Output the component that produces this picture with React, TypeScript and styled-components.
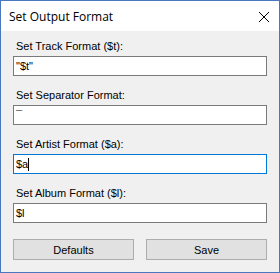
import styled, {createGlobalStyle} from 'styled-components';

const GlobalStyle = createGlobalStyle`
  html, body {
    margin: 0;
    padding: 0;
    background: #ffffff;
  }
  * {
    box-sizing: border-box;
  }
`;

const Window = styled.div`
  width: 280px;
  height: 273px;
  border: 1px solid #4a78c0;
  background: #f0f0f0;
  display: flex;
  flex-direction: column;
  overflow: hidden;
`;

const TitleBar = styled.div`
  height: 30px;
  background: #ffffff;
  display: flex;
  align-items: center;
  justify-content: space-between;
  padding: 0 9px 0 8px;
  font-family: 'Open Sans', 'Noto Sans', sans-serif;
  font-size: 12px;
  color: #000000;
`;

const CloseButton = styled.span`
  display: flex;
  width: 12px;
  height: 12px;
  margin-top: 1px;
`;

const Body = styled.div`
  flex: 1;
  padding: 9px 12px 0 12px;
  display: flex;
  flex-direction: column;
  gap: 13px;
  font-family: 'Liberation Sans', Arial, sans-serif;
  font-size: 11px;
  color: #000000;
`;

const Field = styled.div`
  display: flex;
  flex-direction: column;
  gap: 3px;
`;

const Label = styled.div`
  line-height: 13px;
  padding-left: 3px;
`;

const Input = styled.div<{$focused?: boolean}>`
  height: 20px;
  background: #ffffff;
  border: 1px solid ${({$focused}) => ($focused ? '#0078d7' : '#7a7a7a')};
  display: flex;
  align-items: center;
  padding-left: 2px;
  line-height: 13px;
  white-space: pre;
`;

const Caret = styled.span`
  display: inline-block;
  width: 1px;
  height: 13px;
  background: #000000;
  vertical-align: middle;
`;

const Buttons = styled.div`
  margin-top: 3px;
  display: grid;
  grid-template-columns: 1fr 1fr;
  gap: 12px;
`;

const Button = styled.div`
  height: 21px;
  background: #e1e1e1;
  border: 1px solid #adadad;
  display: flex;
  align-items: center;
  justify-content: center;
`;

export default function App() {
  return (
    <>
      <GlobalStyle />
      <Window>
        <TitleBar>
          <span>Set Output Format</span>
          <CloseButton>
            <svg width="12" height="12" viewBox="0 0 12 12">
              <path d="M1 1 L11 11 M11 1 L1 11" stroke="#000" strokeWidth="1" fill="none" />
            </svg>
          </CloseButton>
        </TitleBar>
        <Body>
          <Field>
            <Label>Set Track Format ($t):</Label>
            <Input>"$t"</Input>
          </Field>
          <Field>
            <Label>Set Separator Format:</Label>
            <Input>¯</Input>
          </Field>
          <Field>
            <Label>Set Artist Format ($a):</Label>
            <Input $focused>
              $a<Caret />
            </Input>
          </Field>
          <Field>
            <Label>Set Album Format ($l):</Label>
            <Input>$l</Input>
          </Field>
          <Buttons>
            <Button>Defaults</Button>
            <Button>Save</Button>
          </Buttons>
        </Body>
      </Window>
    </>
  );
}
